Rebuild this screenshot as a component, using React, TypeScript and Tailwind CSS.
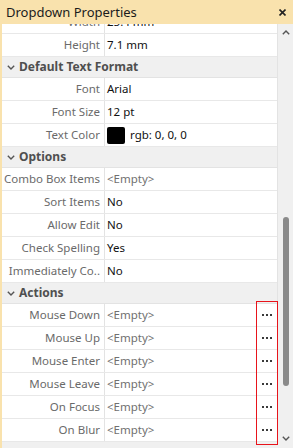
import React from 'react';

type Row =
    | { kind: 'header'; title: string }
    | { kind: 'prop'; name: string; value: string; empty?: boolean; swatch?: boolean; action?: boolean };

const rows: Row[] = [
    { kind: 'prop', name: 'Width', value: '25.4 mm' },
    { kind: 'prop', name: 'Height', value: '7.1 mm' },
    { kind: 'header', title: 'Default Text Format' },
    { kind: 'prop', name: 'Font', value: 'Arial' },
    { kind: 'prop', name: 'Font Size', value: '12 pt' },
    { kind: 'prop', name: 'Text Color', value: 'rgb: 0, 0, 0', swatch: true },
    { kind: 'header', title: 'Options' },
    { kind: 'prop', name: 'Combo Box Items', value: '<Empty>', empty: true },
    { kind: 'prop', name: 'Sort Items', value: 'No' },
    { kind: 'prop', name: 'Allow Edit', value: 'No' },
    { kind: 'prop', name: 'Check Spelling', value: 'Yes' },
    { kind: 'prop', name: 'Immediately Co..', value: 'No' },
    { kind: 'header', title: 'Actions' },
    { kind: 'prop', name: 'Mouse Down', value: '<Empty>', empty: true, action: true },
    { kind: 'prop', name: 'Mouse Up', value: '<Empty>', empty: true, action: true },
    { kind: 'prop', name: 'Mouse Enter', value: '<Empty>', empty: true, action: true },
    { kind: 'prop', name: 'Mouse Leave', value: '<Empty>', empty: true, action: true },
    { kind: 'prop', name: 'On Focus', value: '<Empty>', empty: true, action: true },
    { kind: 'prop', name: 'On Blur', value: '<Empty>', empty: true, action: true },
];

const Chevron = ({ up }: { up?: boolean }) => (
    <svg width="8" height="5" viewBox="0 0 8 5" className={up ? 'rotate-180' : ''}>
        <path d="M0.8 0.8 L4 4 L7.2 0.8" fill="none" stroke="#555" strokeWidth="1.4" />
    </svg>
);

const Dots = () => (
    <div className="flex gap-[2px]">
        <span className="w-[2px] h-[2px] bg-[#3a3a3a]" />
        <span className="w-[2px] h-[2px] bg-[#3a3a3a]" />
        <span className="w-[2px] h-[2px] bg-[#3a3a3a]" />
    </div>
);

const App = () => {
    return (
        <div
            className="relative w-[293px] h-[448px] overflow-hidden bg-[#f9e2ad] flex flex-col text-[11.5px] leading-[16px]"
            style={{ fontFamily: '"Noto Sans", "Open Sans", sans-serif' }}
        >
            {/* title bar */}
            <div className="relative z-10 h-6 shrink-0 flex items-center justify-between pl-[6px] pr-[7px] text-[13px] text-[#1b1b1b] bg-[#f9e2ad]">
                <span>Dropdown Properties</span>
                <svg width="7" height="7" viewBox="0 0 7 7">
                    <path d="M0.5 0.5 L6.5 6.5 M6.5 0.5 L0.5 6.5" stroke="#222" strokeWidth="1.6" />
                </svg>
            </div>

            <div className="flex-1 flex pl-[2px] min-h-0">
                <div className="flex-1 flex flex-col bg-white min-w-0">
                    <div className="flex-1 overflow-hidden border-r border-[#e3e3e3]">
                        <div className="-mt-[13px]">
                            {rows.map((row, i) =>
                                row.kind === 'header' ? (
                                    <div key={i} className="h-[21px] flex items-center gap-[4px] pl-[5px] bg-[#f0f0f0] border-b border-[#e3e3e3]">
                                        <Chevron />
                                        <span className="font-bold text-[#4f4f4f] text-[12px]">{row.title}</span>
                                    </div>
                                ) : (
                                    <div key={i} className="h-[23px] flex border-b border-[#e8e8e8]">
                                        <div className="w-[103px] shrink-0 flex items-center justify-end pr-[4px] border-r border-[#e3e3e3] text-[#6a6a6a] whitespace-nowrap">
                                            {row.name}
                                        </div>
                                        <div className="flex-1 flex items-center pl-[2px] whitespace-nowrap">
                                            {row.swatch && <span className="w-[18px] h-[17px] rounded-[2px] bg-black mr-[5px]" />}
                                            <span className={row.empty ? 'text-[#707070]' : 'text-[#111]'}>{row.value}</span>
                                            {row.action && (
                                                <div className="ml-auto w-[21px] flex justify-center">
                                                    <Dots />
                                                </div>
                                            )}
                                        </div>
                                    </div>
                                )
                            )}
                        </div>
                    </div>
                    <div className="h-[6px] bg-[#f0f0f0]" />
                </div>

                {/* scrollbar */}
                <div className="w-[15px] bg-[#f0f0f0] flex flex-col items-center pt-[6px] pb-[7px]">
                    <Chevron up />
                    <div className="flex-1 w-full flex flex-col items-center pt-[182px] pb-[50px]">
                        <div className="w-[6px] flex-1 rounded-[3px] bg-[#8a8a8a]" />
                    </div>
                    <Chevron />
                </div>
            </div>

            {/* annotation box */}
            <div className="absolute left-[256px] top-[301px] w-[22px] h-[144px] border border-[#e8141b]" />
        </div>
    );
};

export default App;
